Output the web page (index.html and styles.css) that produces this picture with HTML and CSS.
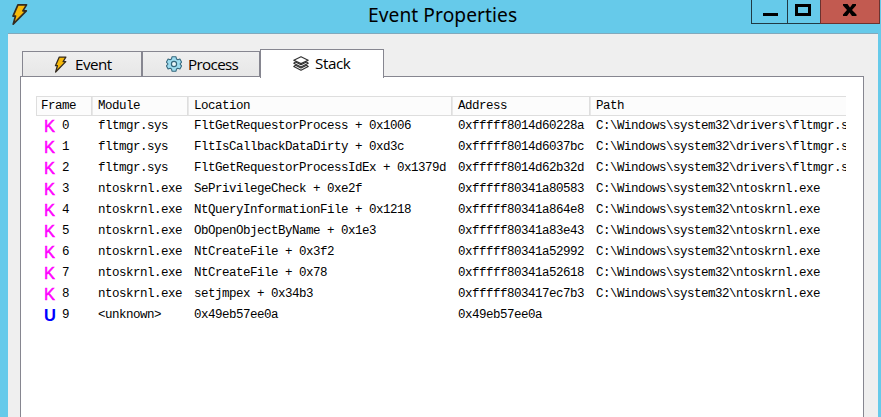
FILE: index.html
```html
<!DOCTYPE html>
<html lang="en">
<head>
<meta charset="utf-8">
<title>Event Properties</title>
<link rel="stylesheet" href="styles.css">
</head>
<body>
<svg class="defs" width="0" height="0" aria-hidden="true">
  <symbol id="bolt" viewBox="0 0 16 20"><path d="M6.500.8h8.200l-3.500 5.700h3.300L2 19.200l2.200-7.700H1.800z" fill="#f7b90a" stroke="#342b20" stroke-width="1.600" stroke-linejoin="round"/></symbol>
</svg>
<div class="window">
  <header class="titlebar">
    <svg class="app-icon"><use href="#bolt"/></svg>
    <h1 class="title"><span>Event Properties</span></h1>
    <div class="controls">
      <button class="control minimize" aria-label="Minimize"><svg width="36" height="23"><path d="M11 13h15v3H11z"/></svg></button>
      <button class="control maximize" aria-label="Maximize"><svg width="32" height="23"><path d="M8.500 5.500h13v9h-13z" fill="none" stroke="#000" stroke-width="3"/></svg></button>
      <button class="control close" aria-label="Close"><svg width="58" height="23"><path d="M22 4h4.500l2.500 3.500L31.500 4H35v1.500L31 10l4.500 4.500V16H31l-2.500-3.500L26 16h-4v-1.500l4-4.500-4-4.500z"/></svg></button>
    </div>
  </header>
  <main class="client">
    <nav class="tabs">
      <div class="tab event"><svg class="tab-bolt"><use href="#bolt"/></svg><span>Event</span></div>
      <div class="tab process"><svg class="gear" viewBox="0 0 16 16"><path d="M5.500 3 6 .8h4l.5 2.200 1.300.7 2.100-.7 1.700 3.100-1.600 1.900 1.600 1.900-1.700 3.100-2.100-.7-1.300.7-.5 2.200H6L5.500 13l-1.300-.7-2.100.7L.4 9.900 2 8 .4 6.100 2.100 3l2.100.7z" fill="#9edcef" stroke="#35677c" stroke-width="1.100" stroke-linejoin="round"/><circle cx="8" cy="8" r="2.600" fill="#e9f5f8" stroke="#35677c" stroke-width="1.200"/></svg><span>Process</span></div>
      <div class="tab stack active"><svg class="layers" viewBox="0 0 16 15"><g fill="#fff" stroke="#333" stroke-width="1.200" stroke-linejoin="round"><path d="M.8 10.500 2.500 9.300 8 12l5.500-2.700 1.700 1.200L8 14.200z"/><path d="M.8 7.300 2.500 6 8 8.700 13.500 6l1.700 1.300L8 11z"/><path d="M8 .8.8 4.200 8 7.600l7.200-3.400z"/></g></svg><span>Stack</span></div>
    </nav>
    <section class="panel">
      <div class="table">
        <div class="row head"><span>Frame</span><span>Module</span><span>Location</span><span>Address</span><span>Path</span></div>
        <div class="row"><span><b>K</b>0</span><span>fltmgr.sys</span><span>FltGetRequestorProcess + 0x1006</span><span>0xfffff8014d60228a</span><span>C:\Windows\system32\drivers\fltmgr.sys</span></div>
        <div class="row"><span><b>K</b>1</span><span>fltmgr.sys</span><span>FltIsCallbackDataDirty + 0xd3c</span><span>0xfffff8014d6037bc</span><span>C:\Windows\system32\drivers\fltmgr.sys</span></div>
        <div class="row"><span><b>K</b>2</span><span>fltmgr.sys</span><span>FltGetRequestorProcessIdEx + 0x1379d</span><span>0xfffff8014d62b32d</span><span>C:\Windows\system32\drivers\fltmgr.sys</span></div>
        <div class="row"><span><b>K</b>3</span><span>ntoskrnl.exe</span><span>SePrivilegeCheck + 0xe2f</span><span>0xfffff80341a80583</span><span>C:\Windows\system32\ntoskrnl.exe</span></div>
        <div class="row"><span><b>K</b>4</span><span>ntoskrnl.exe</span><span>NtQueryInformationFile + 0x1218</span><span>0xfffff80341a864e8</span><span>C:\Windows\system32\ntoskrnl.exe</span></div>
        <div class="row"><span><b>K</b>5</span><span>ntoskrnl.exe</span><span>ObOpenObjectByName + 0x1e3</span><span>0xfffff80341a83e43</span><span>C:\Windows\system32\ntoskrnl.exe</span></div>
        <div class="row"><span><b>K</b>6</span><span>ntoskrnl.exe</span><span>NtCreateFile + 0x3f2</span><span>0xfffff80341a52992</span><span>C:\Windows\system32\ntoskrnl.exe</span></div>
        <div class="row"><span><b>K</b>7</span><span>ntoskrnl.exe</span><span>NtCreateFile + 0x78</span><span>0xfffff80341a52618</span><span>C:\Windows\system32\ntoskrnl.exe</span></div>
        <div class="row"><span><b>K</b>8</span><span>ntoskrnl.exe</span><span>setjmpex + 0x34b3</span><span>0xfffff803417ec7b3</span><span>C:\Windows\system32\ntoskrnl.exe</span></div>
        <div class="row"><span><b class="user">U</b>9</span><span>&lt;unknown&gt;</span><span>0x49eb57ee0a</span><span>0x49eb57ee0a</span><span></span></div>
      </div>
    </section>
  </main>
</div>
</body>
</html>
```
FILE: styles.css
```css
* { box-sizing: border-box; }
body { margin: 0; overflow: hidden; color: #000; }
.defs { display: none; }
.window { display: flex; flex-direction: column; width: 881px; height: 417px; padding: 0 3px 0 8px; background: #66caea; }
.titlebar { display: flex; flex: 0 0 33px; align-items: flex-start; }
.app-icon { width: 17px; height: 21px; margin: 4px 0 0 3px; }
.title { flex: 1; margin: 0 0 0 340px; font: 400 19.200px/30px "Noto Sans", sans-serif; letter-spacing: .06px; white-space: nowrap; }
.controls { display: flex; height: 24px; margin-right: -2px; }
.control { display: block; height: 24px; padding: 0; border: solid #203943; border-width: 0 0 1px 1px; border-radius: 0; background: #66caea; }
.control svg { display: block; }
.minimize { width: 36px; }
.maximize { width: 33px; }
.close { width: 60px; border-color: #6b322f; border-right-width: 1px; background: #c25a50; }
.client { display: flex; flex: 1; flex-direction: column; padding: 15px 14px 0 12px; border-top: 1px solid #81a9bc; background: #efefef; }
.tabs { z-index: 1; display: flex; height: 28px; margin: 0 0 -1px 2px; align-items: flex-end; }
.tab { display: flex; height: 26px; align-items: center; border: 1px solid #868690; background: linear-gradient(#efefef, #e7e7e7); font: 400 15.200px/20px "Open Sans", sans-serif; letter-spacing: -.65px; }
.tab span { white-space: nowrap; }
.event { width: 120px; padding-left: 31px; gap: 8px; letter-spacing: -.5px; }
.process { width: 118px; padding-left: 23px; gap: 6px; }
.stack { width: 124px; height: 29px; align-self: flex-start; padding: 0 0 2px 32px; gap: 6px; border-bottom: 0; background: #fff; }
.stack { letter-spacing: -.4px; }
.tab-bolt { width: 13px; height: 17px; }
.gear { width: 16px; height: 16px; }
.layers { width: 16px; height: 15px; }
.panel { flex: 1; padding: 19px 17px 0 15px; border: 1px solid #868690; border-bottom: 0; background: #fff; }
.table { overflow: hidden; font: 12.500px/21px "Liberation Mono", monospace; letter-spacing: -.501px; }
.row { display: grid; height: 21px; grid-template-columns: 56px 96px 264px 138px 256px; }
.row > span { padding-left: 6px; white-space: pre; }
.row > span:first-child { display: flex; padding-left: 8px; }
.head { height: 19px; margin-bottom: 1px; line-height: 18px; }
.head > span { border: solid #dedede; border-width: 1px 1px 1px 0; background: #fcfcfc; padding-left: 6px; }
.head > span:not(:first-child) { box-shadow: inset 1px 0 #e8e8e8; }
.head > span:first-child { padding-left: 4px; border-left-width: 1px; }
.head > span:last-child { border-right: 0; }
.row b { width: 18px; color: #f0f; font: 400 16.500px/21px "Liberation Sans", sans-serif; letter-spacing: 0; -webkit-text-stroke: .5px #f0f; }
.row .user { color: #00f; font-weight: 700; -webkit-text-stroke: 0; }
```
